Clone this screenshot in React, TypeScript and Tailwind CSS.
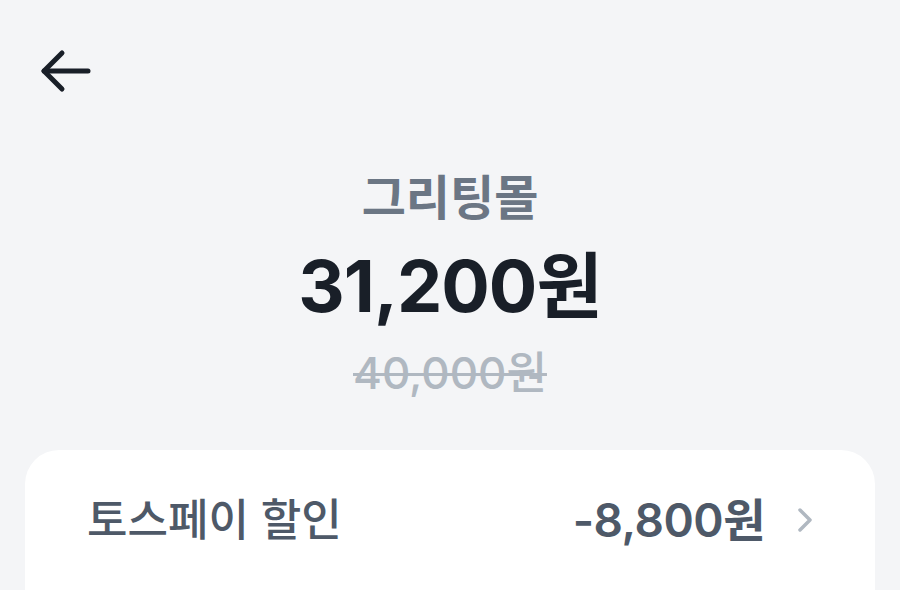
import React from "react";

const font = "font-['Inter','Noto_Sans_CJK_KR',sans-serif]";

const BackArrow = () => (
  <svg width="52" height="44" viewBox="0 0 52 44" fill="none" stroke="#191f28" strokeWidth="5" strokeLinecap="round" strokeLinejoin="round">
    <path d="M4 22h44" />
    <path d="M22 4L4 22l18 18" />
  </svg>
);

const Chevron = () => (
  <svg width="16" height="26" viewBox="0 0 16 26" fill="none" stroke="#b0b8c1" strokeWidth="3.5" strokeLinecap="round" strokeLinejoin="round">
    <path d="M3 3l10 10L3 23" />
  </svg>
);

export default function App() {
  return (
    <div className={`w-[900px] h-[590px] overflow-hidden bg-[#f4f5f7] flex flex-col ${font}`}>
      {/* header */}
      <div className="pl-[40px] pt-[49px] h-[100px]">
        <BackArrow />
      </div>

      {/* merchant + price */}
      <div className="flex flex-col items-center mt-[70px]">
        <p className="text-[48px] leading-[56px] font-semibold text-[#6b7684]">그리팅몰</p>
        <p className="mt-[18px] text-[72px] leading-[84px] font-bold text-[#191f28] tracking-[-1px]">31,200원</p>
        <p className="mt-[19px] text-[44px] leading-[52px] font-medium text-[#b0b8c1] line-through decoration-[3px]">40,000원</p>
      </div>

      {/* discount card */}
      <div className="mx-[25px] mt-[51px] flex-1 bg-white rounded-t-[34px] px-[62px] pt-[42px]">
        <div className="flex items-center justify-between">
          <span className="text-[44px] leading-[56px] font-medium text-[#4e5968]">토스페이 할인</span>
          <div className="flex items-center gap-[32px]">
            <span className="text-[46px] leading-[56px] font-semibold text-[#4e5968] tracking-[-0.5px]">-8,800원</span>
            <Chevron />
          </div>
        </div>
      </div>
    </div>
  );
}
